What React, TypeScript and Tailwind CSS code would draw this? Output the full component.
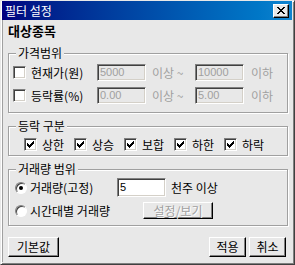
const font = { fontFamily: '"Noto Sans CJK KR", "Noto Sans", sans-serif' };

const Check = ({ checked = false }: { checked?: boolean }) => (
  <span className="flex h-[13px] w-[13px] shrink-0 items-center justify-center border border-t-[#808080] border-l-[#808080] border-r-white border-b-white bg-white shadow-[inset_1px_1px_0_#404040,inset_-1px_-1px_0_#d4d0c8]">
    {checked && (
      <svg width="7" height="7" viewBox="0 0 7 7" shapeRendering="crispEdges">
        <path
          d="M0 2h1v3h-1zM1 3h1v3h-1zM2 4h1v3h-1zM3 3h1v3h-1zM4 2h1v3h-1zM5 1h1v3h-1zM6 0h1v3h-1z"
          fill="#000"
        />
      </svg>
    )}
  </span>
);

const Radio = ({ on = false }: { on?: boolean }) => (
  <span className="flex h-[12px] w-[12px] shrink-0 items-center justify-center rounded-full border border-t-[#808080] border-l-[#808080] border-r-white border-b-white bg-white shadow-[inset_1px_1px_0_#404040]">
    {on && <span className="h-[4px] w-[4px] rounded-full bg-black" />}
  </span>
);

const Field = ({ value, disabled = true, w = "w-[49px]", h = "h-[17px]" }: { value: string; disabled?: boolean; w?: string; h?: string }) => (
  <span
    className={`${w} ${h} flex shrink-0 items-center border border-t-[#808080] border-l-[#808080] border-r-white border-b-white pl-[2px] text-[11px] leading-[13px] shadow-[inset_1px_1px_0_#404040,inset_-1px_-1px_0_#d4d0c8] ${
      disabled ? "bg-[#e8e8e8] text-[#a0a0a0]" : "bg-white text-black"
    }`}
    style={{ fontFamily: '"Liberation Sans", Arial, sans-serif' }}
  >
    {value}
  </span>
);

const Button = ({ label, w, h = "h-[20px]", disabled = false }: { label: string; w: string; h?: string; disabled?: boolean }) => (
  <span
    className={`${w} ${h} flex shrink-0 items-center justify-center border border-t-white border-l-white border-r-black border-b-black bg-[#e8e8e8] text-[12px] leading-[14px] shadow-[inset_-1px_-1px_0_#808080] ${
      disabled ? "text-[#a0a0a0] [text-shadow:1px_1px_0_#fff]" : "text-black"
    }`}
  >
    {label}
  </span>
);

const Group = ({ title, className, children }: { title: string; className: string; children: React.ReactNode }) => (
  <div className={`relative border border-[#a0a0a0] shadow-[inset_1px_1px_0_#fff,1px_1px_0_#fff] ${className}`}>
    <span className="absolute -top-[8px] left-[7px] bg-[#e8e8e8] px-[2px] text-[12px] leading-[14px] text-black">
      {title}
    </span>
    {children}
  </div>
);

export default function App() {
  const ranks = ["상한", "상승", "보합", "하한", "하락"];

  return (
    <div
      className="flex h-[265px] w-[295px] flex-col border border-t-[#e8e8e8] border-l-[#e8e8e8] border-r-[#404040] border-b-[#404040] bg-[#e8e8e8] pb-[2px] pl-[1px] pr-[2px] text-[12px] leading-[14px] text-black shadow-[inset_1px_1px_0_#fff,inset_-1px_-1px_0_#808080]"
      style={font}
    >
      {/* title bar */}
      <div className="flex h-[19px] shrink-0 items-center justify-between bg-gradient-to-r from-[#000080] to-[#1084d0] pl-[3px] pr-[3px]">
        <span className="text-[12px] leading-[14px] text-white">필터 설정</span>
        <span className="flex h-[14px] w-[16px] items-center justify-center border border-t-white border-l-white border-r-black border-b-black bg-[#e8e8e8] shadow-[inset_-1px_-1px_0_#808080]">
          <svg width="8" height="7" viewBox="0 0 8 7" shapeRendering="crispEdges">
            <path
              d="M0 0h2v1h-2zM6 0h2v1h-2zM1 1h2v1h-2zM5 1h2v1h-2zM2 2h4v1h-4zM3 3h2v1h-2zM2 4h4v1h-4zM1 5h2v1h-2zM5 5h2v1h-2zM0 6h2v1h-2zM6 6h2v1h-2z"
              fill="#000"
            />
          </svg>
        </span>
      </div>

      <div className="flex flex-1 flex-col border-l border-[#a0a0a0] pl-[5px] pr-[4px]">
        <div className="mt-[4px] h-[14px] text-[13px] font-bold leading-[14px]">대상종목</div>

        {/* 가격범위 */}
        <Group title="가격범위" className="mt-[15px] h-[60px] pl-[4px] pt-[10px]">
          <div className="flex h-[17px] items-center">
            <Check />
            <span className="ml-[5px] w-[66px]">현재가(원)</span>
            <Field value="5000" />
            <span className="w-[49px] pl-[6px] text-[#a0a0a0]">이상 ~</span>
            <Field value="10000" />
            <span className="pl-[7px] text-[#a0a0a0]">이하</span>
          </div>
          <div className="mt-[6px] flex h-[17px] items-center">
            <Check />
            <span className="ml-[5px] w-[66px]">등락률(%)</span>
            <Field value="0.00" />
            <span className="w-[49px] pl-[6px] text-[#a0a0a0]">이상 ~</span>
            <Field value="5.00" />
            <span className="pl-[7px] text-[#a0a0a0]">이하</span>
          </div>
        </Group>

        {/* 등락 구분 */}
        <Group title="등락 구분" className="mt-[13px] h-[30px] pl-[15px] pt-[11px]">
          <div className="flex h-[13px] items-center">
            {ranks.map((r) => (
              <span key={r} className="flex w-[50px] items-center">
                <Check checked />
                <span className="ml-[5px]">{r}</span>
              </span>
            ))}
          </div>
        </Group>

        {/* 거래량 범위 */}
        <Group title="거래량 범위" className="mt-[13px] h-[57px] pl-[6px] pt-[8px]">
          <div className="flex h-[19px] items-center">
            <Radio on />
            <span className="ml-[3px] w-[87px]">거래량(고정)</span>
            <Field value="5" disabled={false} h="h-[19px]" />
            <span className="ml-[5px]">천주 이상</span>
          </div>
          <div className="mt-[5px] flex h-[17px] items-center">
            <Radio />
            <span className="ml-[3px] w-[113px]">시간대별 거래량</span>
            <Button label="설정/보기" w="w-[70px]" h="h-[17px]" disabled />
          </div>
        </Group>

        {/* bottom buttons */}
        <div className="mt-[11px] flex items-center pr-[2px]">
          <Button label="기본값" w="w-[51px]" />
          <span className="flex-1" />
          <Button label="적용" w="w-[37px]" />
          <span className="ml-[3px]" />
          <Button label="취소" w="w-[37px]" />
        </div>
      </div>
    </div>
  );
}
